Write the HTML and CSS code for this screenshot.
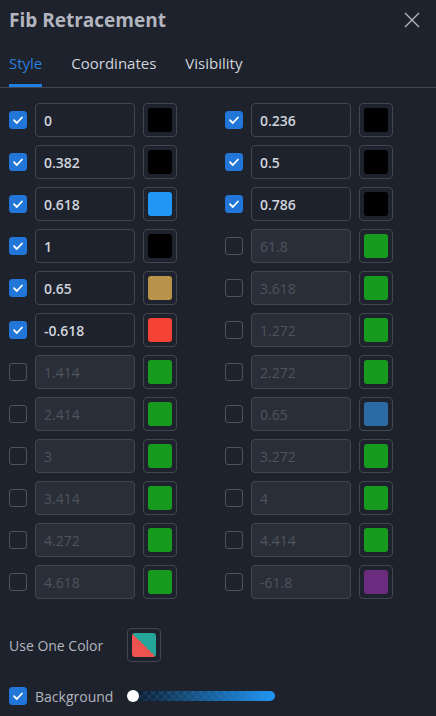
FILE: index.html
```html
<!DOCTYPE html>
<html>
<head>
<meta charset="utf-8">
<link rel="stylesheet" href="styles.css">
</head>
<body>
<div class="dialog">
  <div class="header">
    <div class="title">Fib Retracement</div>
    <svg class="close" width="16" height="16" viewBox="0 0 16 16"><path d="M1 1L15 15M15 1L1 15" stroke="#b2b5be" stroke-width="1.4" fill="none"/></svg>
  </div>
  <div class="tabs">
    <div class="tab active">Style</div>
    <div class="tab">Coordinates</div>
    <div class="tab">Visibility</div>
  </div>
  <div class="levels">
    <div class="level"><span class="cb on"><svg viewBox="0 0 18 18"><path d="M5 9.2L7.8 12L13 6.5" stroke="#fff" stroke-width="1.8" fill="none" stroke-linecap="round" stroke-linejoin="round"/></svg></span><div class="inp">0</div><div class="sw"><i style="background:#000"></i></div></div>
    <div class="level"><span class="cb on"><svg viewBox="0 0 18 18"><path d="M5 9.2L7.8 12L13 6.5" stroke="#fff" stroke-width="1.8" fill="none" stroke-linecap="round" stroke-linejoin="round"/></svg></span><div class="inp">0.236</div><div class="sw"><i style="background:#000"></i></div></div>
    <div class="level"><span class="cb on"><svg viewBox="0 0 18 18"><path d="M5 9.2L7.8 12L13 6.5" stroke="#fff" stroke-width="1.8" fill="none" stroke-linecap="round" stroke-linejoin="round"/></svg></span><div class="inp">0.382</div><div class="sw"><i style="background:#000"></i></div></div>
    <div class="level"><span class="cb on"><svg viewBox="0 0 18 18"><path d="M5 9.2L7.8 12L13 6.5" stroke="#fff" stroke-width="1.8" fill="none" stroke-linecap="round" stroke-linejoin="round"/></svg></span><div class="inp">0.5</div><div class="sw"><i style="background:#000"></i></div></div>
    <div class="level"><span class="cb on"><svg viewBox="0 0 18 18"><path d="M5 9.2L7.8 12L13 6.5" stroke="#fff" stroke-width="1.8" fill="none" stroke-linecap="round" stroke-linejoin="round"/></svg></span><div class="inp">0.618</div><div class="sw"><i style="background:#2196f3"></i></div></div>
    <div class="level"><span class="cb on"><svg viewBox="0 0 18 18"><path d="M5 9.2L7.8 12L13 6.5" stroke="#fff" stroke-width="1.8" fill="none" stroke-linecap="round" stroke-linejoin="round"/></svg></span><div class="inp">0.786</div><div class="sw"><i style="background:#000"></i></div></div>
    <div class="level"><span class="cb on"><svg viewBox="0 0 18 18"><path d="M5 9.2L7.8 12L13 6.5" stroke="#fff" stroke-width="1.8" fill="none" stroke-linecap="round" stroke-linejoin="round"/></svg></span><div class="inp">1</div><div class="sw"><i style="background:#000"></i></div></div>
    <div class="level off"><span class="cb"></span><div class="inp">61.8</div><div class="sw"><i style="background:#169b1f"></i></div></div>
    <div class="level"><span class="cb on"><svg viewBox="0 0 18 18"><path d="M5 9.2L7.8 12L13 6.5" stroke="#fff" stroke-width="1.8" fill="none" stroke-linecap="round" stroke-linejoin="round"/></svg></span><div class="inp">0.65</div><div class="sw"><i style="background:#b8914a"></i></div></div>
    <div class="level off"><span class="cb"></span><div class="inp">3.618</div><div class="sw"><i style="background:#169b1f"></i></div></div>
    <div class="level"><span class="cb on"><svg viewBox="0 0 18 18"><path d="M5 9.2L7.8 12L13 6.5" stroke="#fff" stroke-width="1.8" fill="none" stroke-linecap="round" stroke-linejoin="round"/></svg></span><div class="inp">-0.618</div><div class="sw"><i style="background:#f44336"></i></div></div>
    <div class="level off"><span class="cb"></span><div class="inp">1.272</div><div class="sw"><i style="background:#169b1f"></i></div></div>
    <div class="level off"><span class="cb"></span><div class="inp">1.414</div><div class="sw"><i style="background:#169b1f"></i></div></div>
    <div class="level off"><span class="cb"></span><div class="inp">2.272</div><div class="sw"><i style="background:#169b1f"></i></div></div>
    <div class="level off"><span class="cb"></span><div class="inp">2.414</div><div class="sw"><i style="background:#169b1f"></i></div></div>
    <div class="level off"><span class="cb"></span><div class="inp">0.65</div><div class="sw"><i style="background:#2a6aa7"></i></div></div>
    <div class="level off"><span class="cb"></span><div class="inp">3</div><div class="sw"><i style="background:#169b1f"></i></div></div>
    <div class="level off"><span class="cb"></span><div class="inp">3.272</div><div class="sw"><i style="background:#169b1f"></i></div></div>
    <div class="level off"><span class="cb"></span><div class="inp">3.414</div><div class="sw"><i style="background:#169b1f"></i></div></div>
    <div class="level off"><span class="cb"></span><div class="inp">4</div><div class="sw"><i style="background:#169b1f"></i></div></div>
    <div class="level off"><span class="cb"></span><div class="inp">4.272</div><div class="sw"><i style="background:#169b1f"></i></div></div>
    <div class="level off"><span class="cb"></span><div class="inp">4.414</div><div class="sw"><i style="background:#169b1f"></i></div></div>
    <div class="level off"><span class="cb"></span><div class="inp">4.618</div><div class="sw"><i style="background:#169b1f"></i></div></div>
    <div class="level off"><span class="cb"></span><div class="inp">-61.8</div><div class="sw"><i style="background:#6a2c7e"></i></div></div>
  </div>
  <div class="one-color">
    <div class="label">Use One Color</div>
    <div class="sw"><i class="split"></i></div>
  </div>
  <div class="bg-row">
    <span class="cb on"><svg viewBox="0 0 18 18"><path d="M5 9.2L7.8 12L13 6.5" stroke="#fff" stroke-width="1.8" fill="none" stroke-linecap="round" stroke-linejoin="round"/></svg></span>
    <div class="label">Background</div>
    <div class="slider"><span class="thumb"></span></div>
  </div>
</div>
</body>
</html>
```
FILE: styles.css
```css
html, body {
  margin: 0;
  padding: 0;
  background: #1e222d;
}
.dialog {
  width: 436px;
  height: 716px;
  background: #1e222d;
  font-family: "Open Sans", "Noto Sans", sans-serif;
  color: #d1d4dc;
  overflow: hidden;
}
.header {
  height: 40px;
  display: flex;
  align-items: center;
  justify-content: space-between;
  padding: 0 16px 0 9px;
}
.title {
  font-size: 19px;
  font-weight: 700;
  color: #b2b5be;
}
.close {
  display: block;
}
.tabs {
  display: flex;
  gap: 29px;
  padding: 0 9px;
  height: 47px;
  border-bottom: 1px solid #434651;
}
.tab {
  font-size: 15px;
  font-weight: 500;
  color: #d1d4dc;
  display: flex;
  align-items: center;
  padding-top: 1px;
  box-sizing: border-box;
  border-bottom: 3px solid transparent;
}
.tab.active {
  color: #2a7fde;
  border-bottom-color: #1e7fe0;
}
.levels {
  display: grid;
  grid-template-columns: 168px 168px;
  column-gap: 48px;
  row-gap: 8px;
  padding: 15px 9px 0;
}
.level {
  display: flex;
  align-items: center;
  gap: 8px;
  height: 34px;
}
.cb {
  width: 18px;
  height: 18px;
  box-sizing: border-box;
  border: 1px solid #50535e;
  border-radius: 3px;
  flex: none;
  display: block;
}
.cb.on {
  background: #2276d8;
  border-color: #2276d8;
}
.cb svg {
  display: block;
  width: 18px;
  height: 18px;
  margin: -1px;
}
.inp {
  width: 100px;
  height: 34px;
  box-sizing: border-box;
  border: 1px solid #434651;
  border-radius: 4px;
  padding-left: 8px;
  display: flex;
  align-items: center;
  font-size: 14px;
  font-weight: 600;
  color: #d1d4dc;
}
.off .inp {
  background: #2a2e39;
  border-color: #434651;
  color: #50535e;
  font-weight: 400;
}
.sw {
  width: 34px;
  height: 34px;
  box-sizing: border-box;
  border: 1px solid #434651;
  border-radius: 4px;
  padding: 4px;
  flex: none;
}
.sw i {
  display: block;
  width: 24px;
  height: 24px;
  border-radius: 3px;
}
.sw i.split {
  background: linear-gradient(to top right, #ef5350 50%, #26a69a 50%);
}
.one-color {
  display: flex;
  align-items: center;
  margin-top: 29px;
  padding-left: 9px;
  height: 34px;
}
.one-color .label {
  width: 118px;
  font-size: 14px;
  color: #b2b5be;
}
.bg-row {
  display: flex;
  align-items: center;
  padding-left: 9px;
  margin-top: 17px;
  height: 34px;
}
.bg-row .label {
  margin-left: 8px;
  width: 92px;
  font-size: 14px;
  color: #b2b5be;
}
.slider {
  position: relative;
  width: 148px;
  height: 10px;
  border-radius: 5px;
  background:
    linear-gradient(to right, rgba(33,150,243,0.05) 0%, rgba(33,150,243,0.55) 50%, #2196f3 100%),
    conic-gradient(#0a0d13 25%, #17202e 0 50%, #0a0d13 0 75%, #17202e 0) 0 0 / 8px 8px;
}
.thumb {
  position: absolute;
  left: 0;
  top: -1px;
  width: 12px;
  height: 12px;
  border-radius: 50%;
  background: #fff;
}
```
